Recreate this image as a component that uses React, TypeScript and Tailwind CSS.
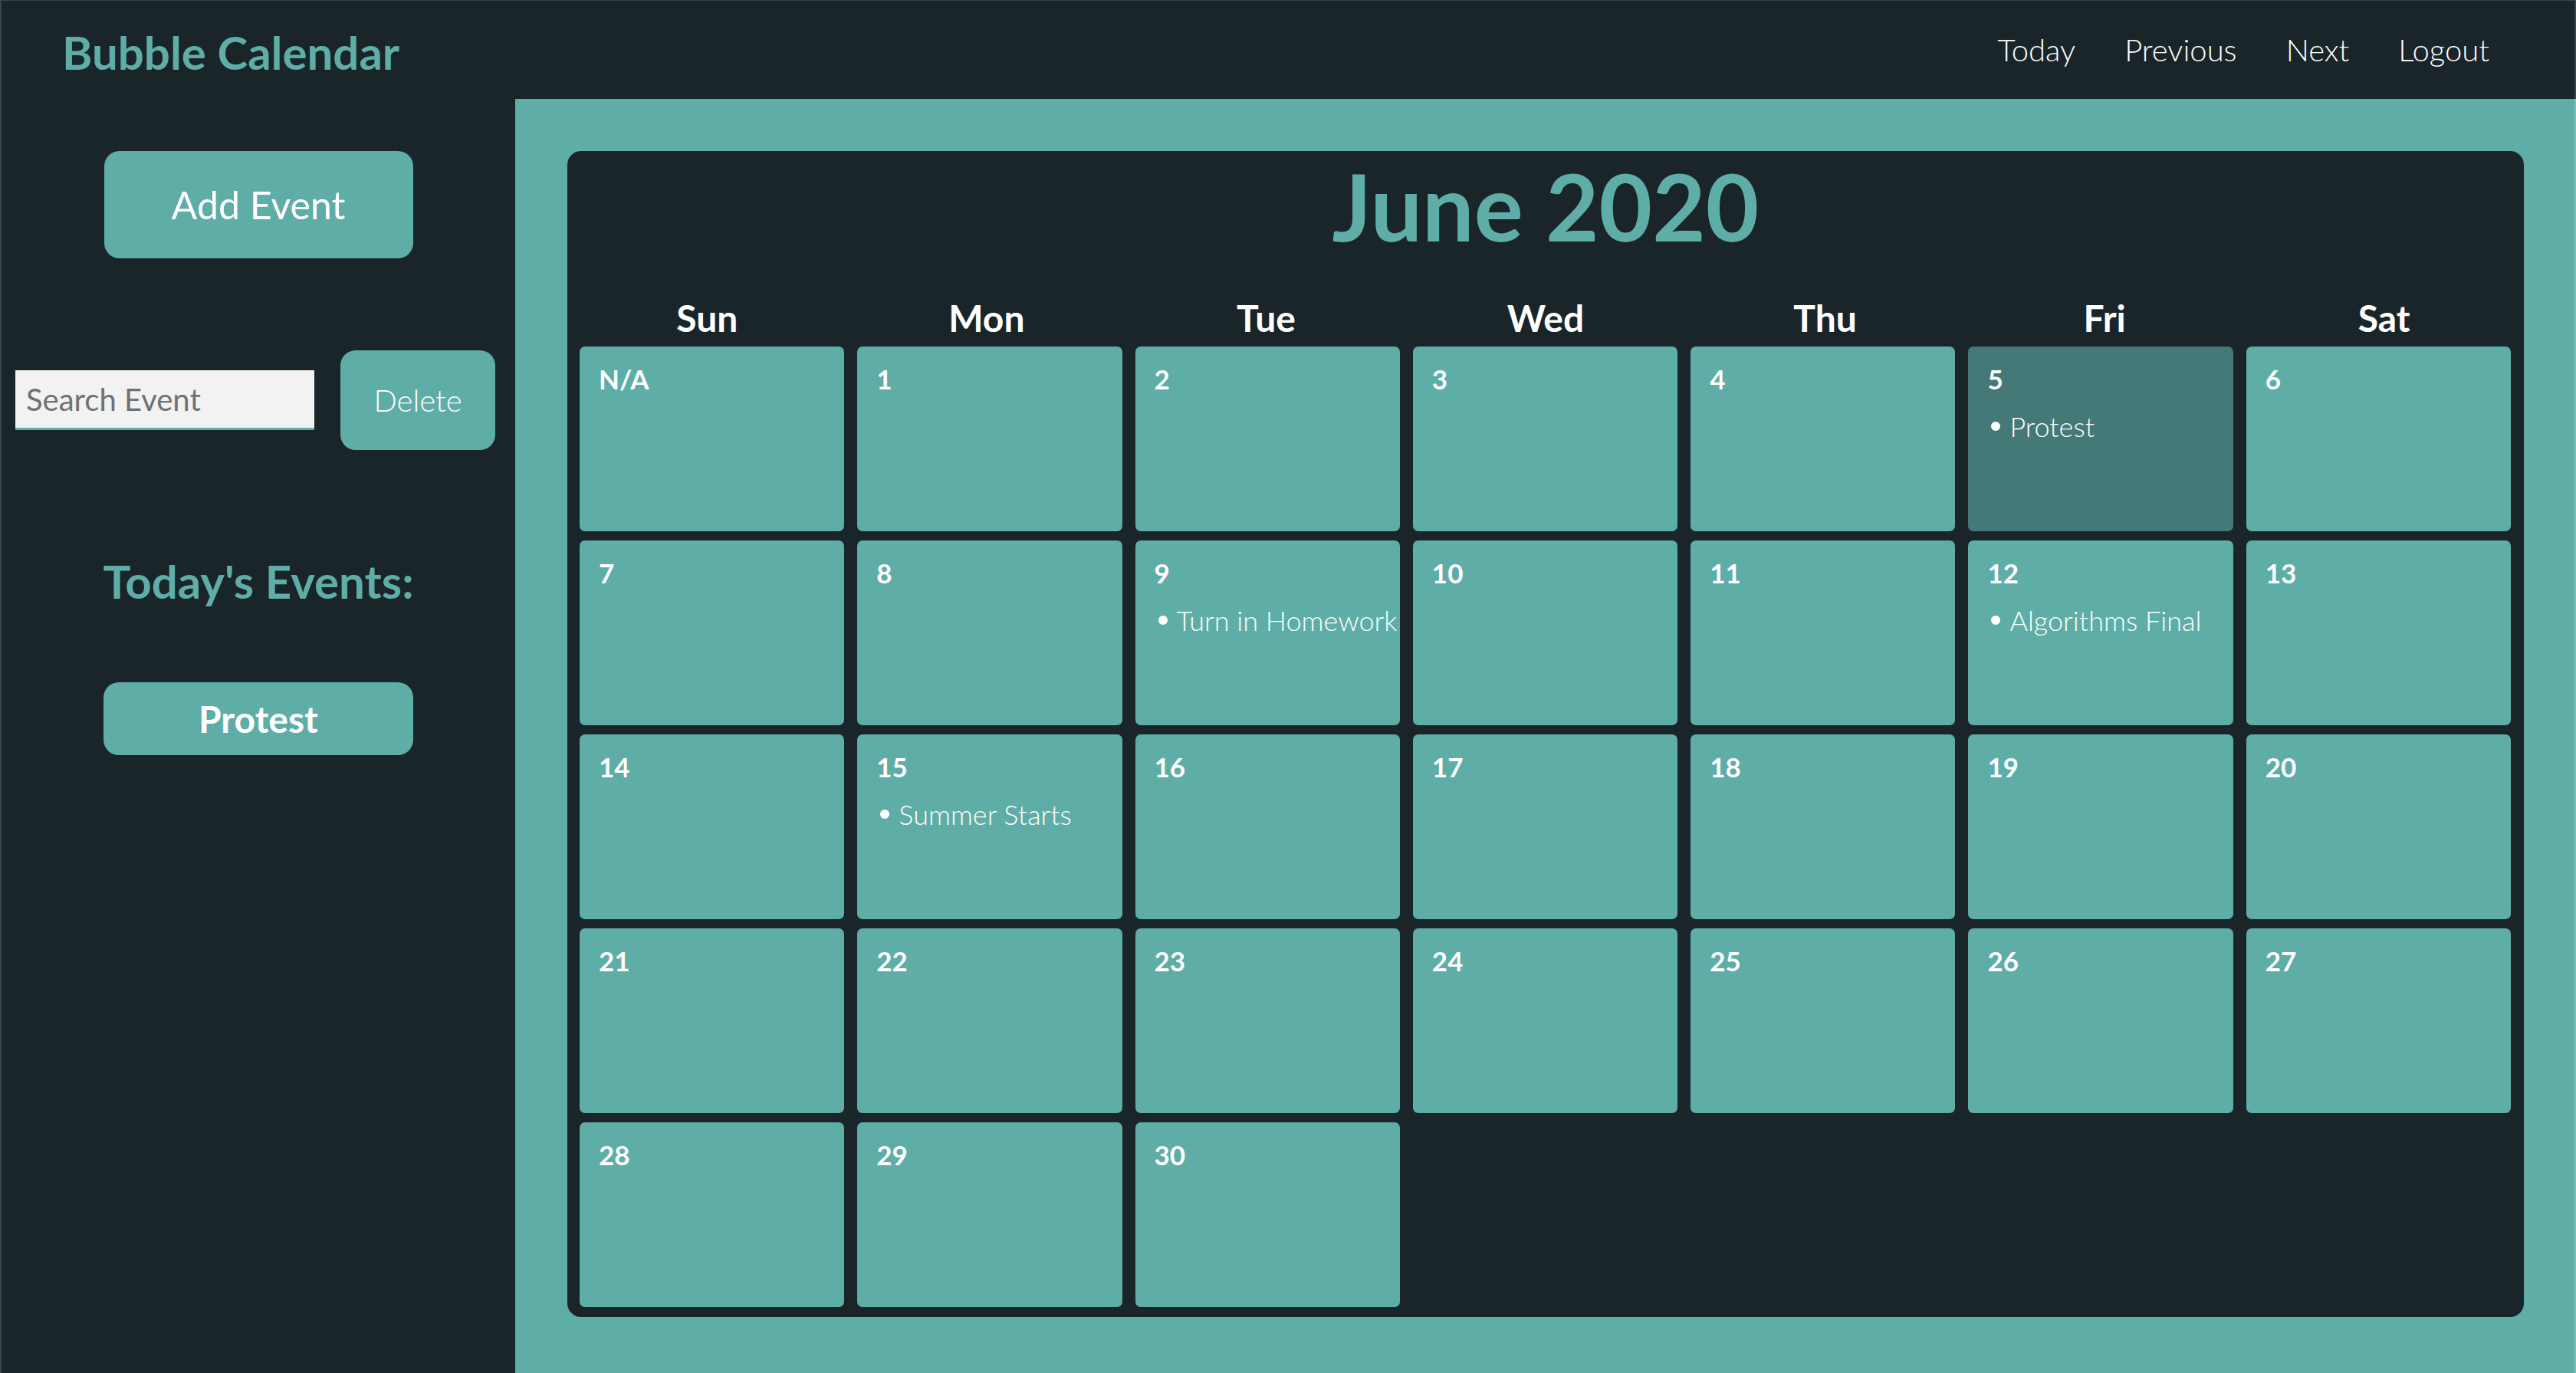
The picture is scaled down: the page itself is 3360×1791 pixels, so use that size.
import React from "react";

const teal = "bg-[#5eada7]";

const navLinks = ["Today", "Previous", "Next", "Logout"];
const weekDays = ["Sun", "Mon", "Tue", "Wed", "Thu", "Fri", "Sat"];

const events: Record<string, string> = {
  "5": "Protest",
  "9": "Turn in Homework",
  "12": "Algorithms Final",
  "15": "Summer Starts",
};

const days = ["N/A", ...Array.from({ length: 30 }, (_, i) => String(i + 1))];

const DayCell = ({ day }: { day: string }) => {
  const selected = day === "5";
  return (
    <div
      className={`h-[241px] rounded-[7px] pl-[25px] pt-[21px] text-white ${
        selected ? "bg-[#447977]" : teal
      }`}
    >
      <div className="text-[35px] font-bold leading-[1.2]">{day}</div>
      {events[day] && (
        <div className="mt-[20px] flex items-center gap-[12px] whitespace-nowrap text-[36px] font-light leading-[1.2]">
          <span className="ml-[5px] h-[12px] w-[12px] rounded-full bg-white" />
          {events[day]}
        </div>
      )}
    </div>
  );
};

export default function App() {
  return (
    <div className="flex min-h-screen flex-col bg-[#1a252a] font-[Lato,sans-serif]">
      <header className="flex h-[129px] items-center justify-between border-x-2 border-t border-white/15 pl-[79px] pr-[111px]">
        <h1 className="mt-[6px] text-[60px] font-bold leading-[1.2] text-[#5eada7]">Bubble Calendar</h1>
        <nav className="flex gap-[64px] text-[40px] font-light leading-[1.2] text-white">
          {navLinks.map((n) => (
            <a key={n} href="#" className="hover:underline">
              {n}
            </a>
          ))}
        </nav>
      </header>

      <div className="flex flex-1">
        <aside className="flex w-[672px] flex-col items-center border-l-2 border-white/15 pt-[68px]">
          <button className={`h-[140px] w-[403px] rounded-[20px] ${teal} text-[50px] text-white`}>
            Add Event
          </button>

          <div className="mt-[120px] flex items-center gap-[34px] self-start pl-[18px]">
            <input
              type="text"
              placeholder="Search Event"
              className="h-[78px] w-[390px] border-b-[3px] border-[#5eada7] bg-[#f2f2f2] pl-[14px] text-[40px] text-[#333] outline-none placeholder:text-[#717171]"
            />
            <button className={`h-[130px] w-[202px] rounded-[20px] ${teal} text-[40px] font-light text-white`}>
              Delete
            </button>
          </div>

          <h2 className="mt-[135px] text-[60px] font-bold leading-[1.2] text-[#5eada7]">Today's Events:</h2>

          <button className={`mt-[96px] h-[95px] w-[404px] rounded-[20px] ${teal} text-[48px] font-bold text-white`}>
            Protest
          </button>
        </aside>

        <main className={`flex-1 ${teal} border-r-2 border-white/20 pb-[73px] pl-[68px] pr-[66px] pt-[68px]`}>
          <div className="rounded-[18px] bg-[#1a252a] pb-[13px]">
            <h2 className="text-center text-[120px] font-bold leading-[1.2] text-[#5eada7]">June 2020</h2>

            <div className="mt-[45px] grid grid-cols-7 text-center text-[48px] font-bold leading-[1.2] text-white">
              {weekDays.map((d) => (
                <div key={d}>{d}</div>
              ))}
            </div>

            <div className="mt-[8px] grid grid-cols-7 gap-x-[17px] gap-y-[12px] pl-[16px] pr-[17px]">
              {days.map((d) => (
                <DayCell key={d} day={d} />
              ))}
            </div>
          </div>
        </main>
      </div>
    </div>
  );
}
